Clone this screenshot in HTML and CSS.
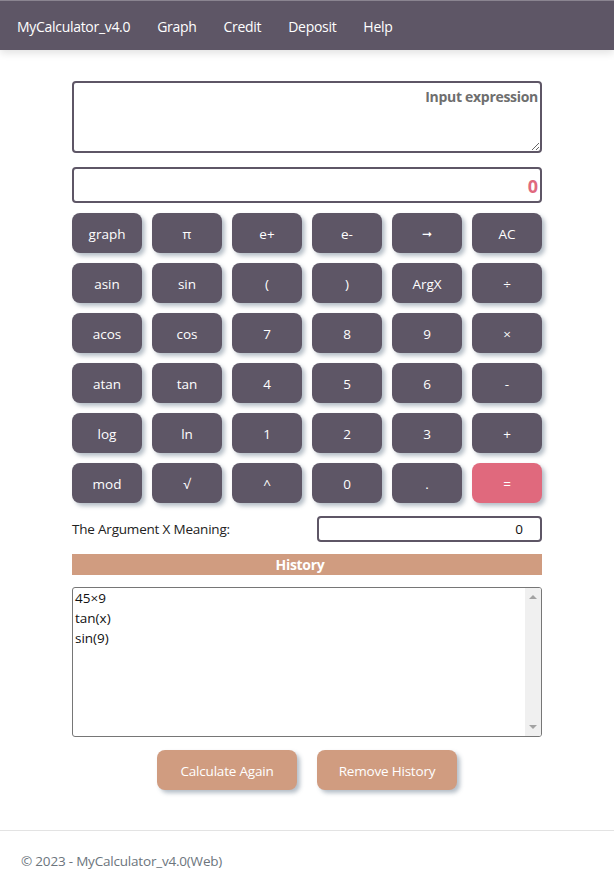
FILE: index.html
```html
<!DOCTYPE html>
<html>
<head>
<meta charset="utf-8">
<link rel="stylesheet" href="styles.css">
</head>
<body>
<header class="navbar">
  <span class="brand">MyCalculator_v4.0</span>
  <span class="nav-link">Graph</span>
  <span class="nav-link">Credit</span>
  <span class="nav-link">Deposit</span>
  <span class="nav-link">Help</span>
</header>
<main class="container">
  <textarea class="expr" placeholder="Input expression"></textarea>
  <div class="result">0</div>
  <div class="keys">
    <button class="key">graph</button>
    <button class="key">π</button>
    <button class="key">e+</button>
    <button class="key">e-</button>
    <button class="key key-arrow">➞</button>
    <button class="key">AC</button>
    <button class="key">asin</button>
    <button class="key">sin</button>
    <button class="key">(</button>
    <button class="key">)</button>
    <button class="key">ArgX</button>
    <button class="key">÷</button>
    <button class="key">acos</button>
    <button class="key">cos</button>
    <button class="key">7</button>
    <button class="key">8</button>
    <button class="key">9</button>
    <button class="key">×</button>
    <button class="key">atan</button>
    <button class="key">tan</button>
    <button class="key">4</button>
    <button class="key">5</button>
    <button class="key">6</button>
    <button class="key">-</button>
    <button class="key">log</button>
    <button class="key">ln</button>
    <button class="key">1</button>
    <button class="key">2</button>
    <button class="key">3</button>
    <button class="key">+</button>
    <button class="key">mod</button>
    <button class="key">√</button>
    <button class="key">^</button>
    <button class="key">0</button>
    <button class="key">.</button>
    <button class="key key-eq">=</button>
  </div>
  <div class="arg-row">
    <span class="arg-label">The Argument X Meaning:</span>
    <div class="arg-input">0</div>
  </div>
  <div class="history-title">History</div>
  <div class="history">
    <div class="history-text">45×9
tan(x)
sin(9)</div>
    <div class="scrollbar">
      <span class="arrow-up"></span>
      <span class="arrow-down"></span>
    </div>
  </div>
  <div class="actions">
    <button class="act">Calculate Again</button>
    <button class="act">Remove History</button>
  </div>
</main>
<footer class="footer">© 2023 - MyCalculator_v4.0(Web)</footer>
</body>
</html>
```
FILE: styles.css
```css
html, body {
  margin: 0;
  padding: 0;
  background: #fff;
  font-family: "Open Sans", "Noto Sans", sans-serif;
}
.navbar {
  box-sizing: border-box;
  height: 50px;
  border-top: 1px solid #8a8490;
  background: #5e5666;
  display: flex;
  align-items: center;
  padding-left: 17px;
  padding-top: 1px;
  gap: 27px;
  box-shadow: 0 3px 8px rgba(0,0,0,0.12);
  color: #fff;
  font-size: 14px;
  letter-spacing: -0.3px;
}
.container {
  width: 470px;
  margin: 31px auto 0;
  display: flex;
  flex-direction: column;
}
.expr {
  box-sizing: border-box;
  width: 470px;
  height: 72px;
  border: 2px solid #5e5666;
  border-radius: 4px;
  resize: vertical;
  margin: 0;
  padding: 4px 2px;
  font-family: inherit;
  font-size: 14px;
  text-align: right;
  outline: none;
}
.expr::placeholder {
  color: #6e6e6e;
  font-weight: 700;
  letter-spacing: -0.3px;
}
.result {
  box-sizing: border-box;
  margin-top: 14px;
  height: 36px;
  border: 2px solid #5e5666;
  border-radius: 4px;
  text-align: right;
  padding: 2px 2px 0;
  color: #e0697d;
  font-weight: 700;
  font-size: 18px;
  line-height: 30px;
}
.keys {
  margin-top: 10px;
  display: grid;
  grid-template-columns: repeat(6, 70px);
  column-gap: 10px;
  row-gap: 10px;
}
.key {
  height: 40px;
  border: none;
  border-radius: 8px;
  background: #5e5666;
  color: #fff;
  font-family: inherit;
  font-size: 13.5px;
  box-shadow: 3px 3px 4px rgba(90, 110, 130, 0.45);
  padding: 2px 0 0;
}
.key-arrow {
  font-family: "DejaVu Sans", sans-serif;
  font-size: 12px;
}
.key-eq {
  background: #e0697d;
}
.arg-row {
  margin-top: 13px;
  display: flex;
  justify-content: space-between;
  align-items: center;
}
.arg-label {
  font-size: 13.5px;
  color: #222;
  letter-spacing: -0.2px;
}
.arg-input {
  box-sizing: border-box;
  width: 225px;
  height: 26px;
  border: 2px solid #5e5666;
  border-radius: 4px;
  text-align: right;
  padding: 0 17px 0 0;
  font-size: 13.5px;
  line-height: 22px;
  color: #111;
}
.history-title {
  margin-top: 12px;
  height: 21px;
  background: #d09c80;
  color: #fff;
  font-weight: 700;
  font-size: 14px;
  line-height: 21px;
  text-align: center;
  padding-right: 14px;
  letter-spacing: -0.3px;
}
.history {
  box-sizing: border-box;
  margin-top: 12px;
  height: 150px;
  border: 1px solid #767676;
  border-radius: 3px;
  display: flex;
  overflow: hidden;
}
.history-text {
  flex: 1;
  white-space: pre-line;
  padding: 0 2px;
  font-size: 13.5px;
  line-height: 20px;
  color: #111;
}
.scrollbar {
  width: 16px;
  background: #f0f0f0;
  display: flex;
  flex-direction: column;
  justify-content: space-between;
  align-items: center;
  padding: 7px 0 7px;
}
.arrow-up {
  width: 0;
  height: 0;
  border-left: 4px solid transparent;
  border-right: 4px solid transparent;
  border-bottom: 4px solid #a3a3a3;
}
.arrow-down {
  width: 0;
  height: 0;
  border-left: 4px solid transparent;
  border-right: 4px solid transparent;
  border-top: 4px solid #a3a3a3;
}
.actions {
  margin-top: 13px;
  display: flex;
  justify-content: center;
  gap: 20px;
}
.act {
  width: 140px;
  height: 40px;
  border: none;
  border-radius: 8px;
  background: #d09c80;
  color: #fff;
  font-family: inherit;
  font-size: 13.5px;
  letter-spacing: -0.2px;
  box-shadow: 3px 3px 4px rgba(90, 110, 130, 0.45);
  padding: 2px 0 0;
}
.footer {
  margin-top: 40px;
  border-top: 1px solid #e3e3e3;
  padding: 21px 21px 0;
  height: 40px;
  color: #6c757d;
  font-size: 13.5px;
  letter-spacing: -0.2px;
}
```
